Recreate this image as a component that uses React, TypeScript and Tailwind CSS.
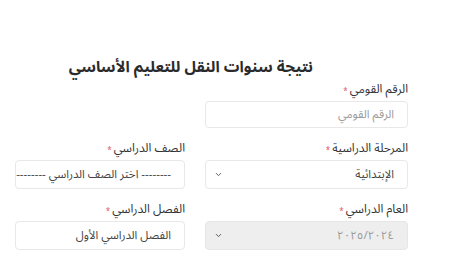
import { ChevronDown } from "lucide-react";

const font = { fontFamily: '"Noto Sans Arabic", "DejaVu Sans", sans-serif' };

function Label({ text }: { text: string }) {
  return (
    <div className="flex items-center gap-[2px] h-[17px] mb-[3px] text-[12px] text-[#333]">
      <span>{text}</span>
      <span className="text-[#e0556b] text-[8px] leading-none mt-[4px]">*</span>
    </div>
  );
}

function Box({
  text,
  muted,
  chevron,
  gray,
  focus,
  h = "h-[29px]",
}: {
  text: string;
  muted?: boolean;
  chevron?: boolean;
  gray?: boolean;
  focus?: boolean;
  h?: string;
}) {
  return (
    <div
      className={`relative flex items-center ${h} rounded-[4px] border overflow-hidden whitespace-nowrap pr-[13px] pl-[8px] text-[11.5px] ${
        gray ? "bg-[#eeeeee] border-[#e6e6e6]" : "bg-white border-[#e8e8e8]"
      } ${focus ? "border-[#c9d6d0]" : ""} ${muted ? "text-[#9a9a9a]" : "text-[#444]"}`}
    >
      <span className="flex-1">{text}</span>
      {chevron && <ChevronDown size={9} strokeWidth={2.5} className="text-[#555] shrink-0" />}
    </div>
  );
}

export default function App() {
  return (
    <div dir="rtl" style={font} className="w-[450px] h-[280px] bg-white overflow-hidden">
      <div className="pr-[42px] pl-[15px] pt-[56px]">
        <h1 className="text-[15.5px] font-bold text-[#2b2b2b] leading-[22px] pr-[95px] mb-[3px]">
          نتيجة سنوات النقل للتعليم الأساسي
        </h1>

        <div className="grid grid-cols-[203px_170px] gap-x-[20px]">
          <div>
            <Label text="الرقم القومي" />
            <Box text="الرقم القومي" muted h="h-[27px]" />
          </div>
          <div />

          <div className="mt-[12px]">
            <Label text="المرحلة الدراسية" />
            <Box text="الإبتدائية" chevron />
          </div>
          <div className="mt-[12px]">
            <Label text="الصف الدراسي" />
            <Box text="-------- اختر الصف الدراسي --------" focus />
          </div>

          <div className="mt-[12px]">
            <Label text="العام الدراسي" />
            <Box text="٢٠٢٥/٢٠٢٤" muted gray chevron />
          </div>
          <div className="mt-[12px]">
            <Label text="الفصل الدراسي" />
            <Box text="الفصل الدراسي الأول" />
          </div>
        </div>
      </div>
    </div>
  );
}
